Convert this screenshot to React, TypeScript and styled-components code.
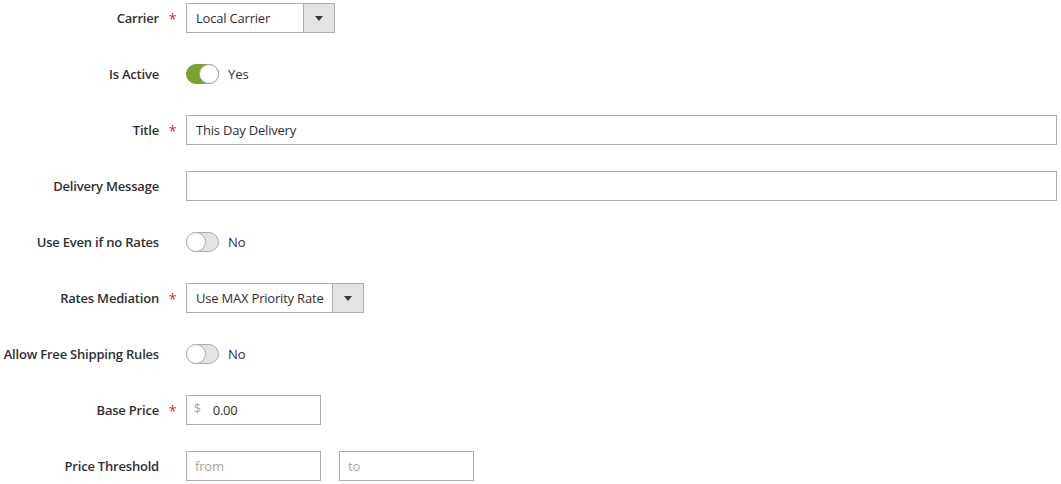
import React from 'react';
import styled, { createGlobalStyle } from 'styled-components';

const GlobalStyle = createGlobalStyle`
  html, body {
    margin: 0;
    padding: 0;
    background: #ffffff;
  }
  body {
    font-family: "Open Sans", "Liberation Sans", sans-serif;
    color: #303030;
  }
`;

const Form = styled.div`
  display: grid;
  grid-template-columns: 159px 27px 1fr;
  grid-auto-rows: 30px;
  row-gap: 26px;
  align-items: center;
  padding: 3px 4px 0 0;
`;

const Label = styled.div`
  text-align: right;
  font-size: 13px;
  font-weight: 600;
  letter-spacing: -0.2px;
  color: #303030;
  white-space: nowrap;
`;

const Required = styled.div`
  text-align: center;
  color: #e22626;
  font-size: 14px;
  font-weight: 400;
  line-height: 1;
  padding-top: 2px;
`;

const Control = styled.div`
  display: flex;
  align-items: center;
  gap: 18px;
  height: 30px;
`;

const Box = styled.div<{ $width?: number }>`
  box-sizing: border-box;
  height: 30px;
  width: ${p => (p.$width ? `${p.$width}px` : '100%')};
  border: 1px solid #adadad;
  background: #fff;
  display: flex;
  align-items: center;
  padding: 0 0 0 9px;
  font-size: 13px;
  letter-spacing: -0.2px;
  color: #303030;
`;

const Placeholder = styled.span`
  color: #a6a6a6;
  margin-left: -1px;
`;

const Prefix = styled.span`
  color: #a6a6a6;
  font-size: 12px;
  margin: 0 12px 0 -2px;
  position: relative;
  top: -2px;
`;

const SelectText = styled.span`
  flex: 1;
  white-space: nowrap;
`;

const SelectButton = styled.div`
  width: 30px;
  height: 100%;
  border-left: 1px solid #adadad;
  background: #e3e3e3;
  display: flex;
  align-items: center;
  justify-content: center;
`;

const Arrow = styled.div`
  width: 0;
  height: 0;
  border-left: 4px solid transparent;
  border-right: 4px solid transparent;
  border-top: 5px solid #41362f;
`;

const Switch = styled.div<{ $on: boolean }>`
  box-sizing: border-box;
  position: relative;
  width: 33px;
  height: 20px;
  border-radius: 10px;
  border: 1px solid ${p => (p.$on ? '#79a22e' : '#adadad')};
  background: ${p => (p.$on ? '#79a22e' : '#e3e3e3')};
`;

const Knob = styled.div<{ $on: boolean }>`
  box-sizing: border-box;
  position: absolute;
  top: -1px;
  ${p => (p.$on ? 'right: -1px;' : 'left: -1px;')}
  width: 20px;
  height: 20px;
  border-radius: 50%;
  background: #fff;
  border: 1px solid #adadad;
`;

const SwitchText = styled.span`
  font-size: 13px;
  color: #303030;
  margin-left: -9px;
`;

const Select = ({ value, width }: { value: string; width: number }) => (
  <Box $width={width}>
    <SelectText>{value}</SelectText>
    <SelectButton>
      <Arrow />
    </SelectButton>
  </Box>
);

const Toggle = ({ on }: { on: boolean }) => (
  <>
    <Switch $on={on}>
      <Knob $on={on} />
    </Switch>
    <SwitchText>{on ? 'Yes' : 'No'}</SwitchText>
  </>
);

interface Row {
  label: string;
  required?: boolean;
  control: React.ReactNode;
}

const rows: Row[] = [
  { label: 'Carrier', required: true, control: <Select value="Local Carrier" width={149} /> },
  { label: 'Is Active', control: <Toggle on /> },
  { label: 'Title', required: true, control: <Box>This Day Delivery</Box> },
  { label: 'Delivery Message', control: <Box /> },
  { label: 'Use Even if no Rates', control: <Toggle on={false} /> },
  { label: 'Rates Mediation', required: true, control: <Select value="Use MAX Priority Rate" width={178} /> },
  { label: 'Allow Free Shipping Rules', control: <Toggle on={false} /> },
  {
    label: 'Base Price',
    required: true,
    control: (
      <Box $width={135}>
        <Prefix>$</Prefix>0.00
      </Box>
    ),
  },
  {
    label: 'Price Threshold',
    control: (
      <>
        <Box $width={135}>
          <Placeholder>from</Placeholder>
        </Box>
        <Box $width={135}>
          <Placeholder>to</Placeholder>
        </Box>
      </>
    ),
  },
];

export default function App() {
  return (
    <>
      <GlobalStyle />
      <Form>
        {rows.map(r => (
          <React.Fragment key={r.label}>
            <Label>{r.label}</Label>
            <Required>{r.required ? '*' : ''}</Required>
            <Control>{r.control}</Control>
          </React.Fragment>
        ))}
      </Form>
    </>
  );
}
